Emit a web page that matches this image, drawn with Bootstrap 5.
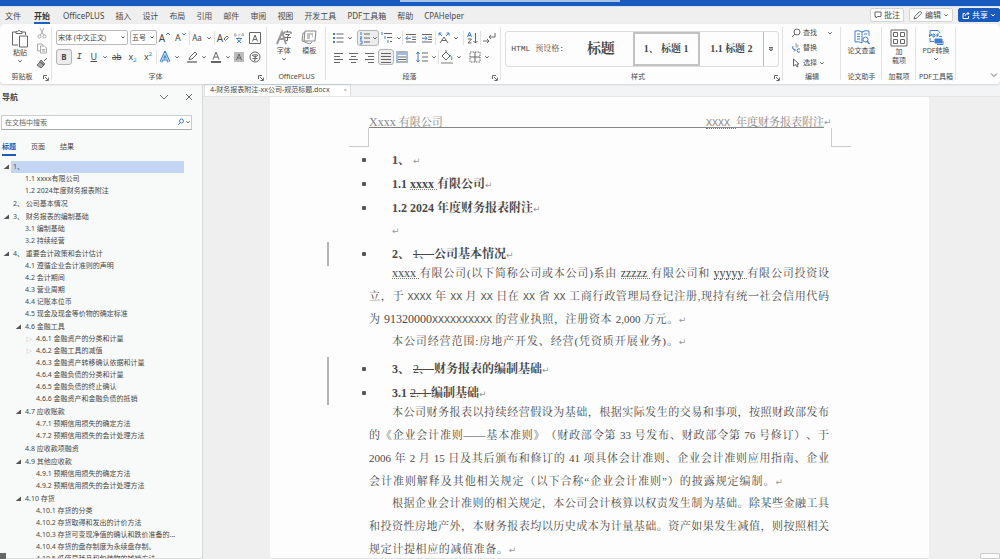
<!DOCTYPE html>
<html lang="zh-CN">
<head>
<meta charset="utf-8">
<meta name="viewport" content="width=device-width, initial-scale=1">
<title>4-财务报表附注-xx公司-规范标题.docx</title>
<link href="https://cdn.jsdelivr.net/npm/bootstrap@5.3.0/dist/css/bootstrap.min.css" rel="stylesheet">
<script src="https://cdn.jsdelivr.net/npm/bootstrap@5.3.0/dist/js/bootstrap.bundle.min.js" defer></script>
<style>
:root{--blue:#185abd;--ink:#484848}
body{font-family:"Noto Sans","Noto Sans CJK SC",sans-serif;font-size:7px;line-height:10px;color:var(--ink);background:#efefef}
button{font:inherit;color:inherit;background:none;border:0;padding:0}
a{color:inherit;text-decoration:none}
svg{display:block;fill:none;stroke:#666;stroke-width:1;flex:none}
.i16{width:16px;height:16px}.i12{width:12px;height:12px}.chev{width:6px;height:6px}
.b{stroke:#3f7fd0}
.titlebar{height:6px;background:var(--blue)}
.titlebar div{height:2px;width:22%;margin-left:40%;background:#a9c6ea}
.menubar{height:18px;font-size:8px;border-top:1px solid #d5e0f0}
.tabs8{gap:11px;padding-left:5px}
.tabs8 a{line-height:12px;border-bottom:2px solid transparent;margin-top:3px;white-space:nowrap}
.tabs8 a.on{font-weight:700;border-color:var(--blue);color:#333;margin-left:2px;margin-right:2px}
.actions{gap:5px;padding-top:1px}
.pill{background:#fff;border:1px solid #d4d4d4;border-radius:2px;height:14px;padding:0 3px;gap:2px}
.pill.share{background:var(--blue);border-color:var(--blue);color:#fff}
.pill.share svg{stroke:#fff}
.ribbon{background:#fdfdfd;height:60px;border-radius:5px 5px 4px 4px;box-shadow:0 1px 2px #d5d5d5;z-index:2}
.grp{position:relative;display:flex;flex-direction:column;height:60px;flex:none}
.grp::after{content:"";position:absolute;right:0;top:3px;bottom:4px;width:1px;background:#e2e2e2}
.gbody{height:46px;padding:0 4px}
.glabel{height:14px;line-height:14px;text-align:center;white-space:nowrap}
.launch{position:absolute;right:3px;bottom:3px}
.launch svg{width:6px;height:6px}
.rows{display:flex;flex-direction:column;padding-top:6px;gap:3px}
.rows>div{display:flex;align-items:center;height:16px}
.rows button{display:flex;align-items:center;justify-content:center;height:16px;width:16px;font-size:10px}
.rows button.dd{width:8px}
.rows button.boxed{border:1px solid #b5b5b5;background:#ececec;border-radius:3px}
.rows button.two{width:24px}
.rows button.t9{font-size:9px}
.rows button.t8{font-size:8px}
.rows button.n15{width:15px}
.tiny2{font-size:6px;color:#3f7fd0}
.vr1{width:1px;height:14px;background:#e2e2e2}
.combo{appearance:none;height:15px;border:1px solid #bbb;border-radius:2px;font-size:7px;line-height:12px;padding:0 8px 0 1px;color:var(--ink);background:#fff url("data:image/svg+xml,%3Csvg xmlns='http://www.w3.org/2000/svg' width='4' height='3'%3E%3Cpath d='M.5.5 2 2 3.5.5' fill='none' stroke='%23555'/%3E%3C/svg%3E") no-repeat right 2px center}
.combo.face{width:72px;margin-right:2px}.combo.size{width:27px}
.big{display:flex;flex-direction:column;align-items:center;padding-top:5px;line-height:9px}
.big svg.chev{margin-top:1px}
.w-clip{width:52px}.w-font{width:215px}.w-plus{width:59px}.w-para{width:175px}
.w-find{width:58px}.w-one{width:41px}.w-two{width:34px}.w-three{width:40px}
.w-paste{width:32px}.w-fold{width:44px;padding:0 2px 5px 0}
.stack3{padding-top:3px;gap:3px}
.tiny{padding-top:2px}
.tiny button{display:flex;height:15px;align-items:center;gap:2px}
.gallery{margin:7px 0 0;height:36px;border:1px solid #ddd;border-radius:3px}
.gallery button{flex:1 1 0;height:34px;font-family:"Liberation Serif","Noto Serif CJK SC","Noto Sans CJK SC",serif;font-weight:700;font-size:10px;white-space:nowrap;overflow:hidden}
.gallery .g-html{font-family:"Liberation Mono","Noto Serif CJK SC","Noto Sans CJK SC",monospace;font-weight:400;font-size:8px}
.gallery .g-title{font-size:14px}
.gallery .on{border:2px solid #c2c2c2}
.gallery .more{flex:0 0 15px;border-left:1px solid #bbb}
.navpane{width:203px;flex:none;background:#f8faf9;border-right:1px solid #d8d8d8;margin-top:1px;overflow:hidden;border-bottom:1px solid #ddd}
.ntitle{font-size:8px;height:24px;padding:0 9px 0 2px}
.search{margin:6px 10px 0 1px;height:15px;border:1px solid #ccc;border-bottom-color:#aaa;background:#fff}
.search input{border:0;outline:0;font-size:7px;padding:0 3px;min-width:0;background:none;color:#555;height:13px}
.search input::placeholder{color:#666;opacity:1}
.ntabs{gap:15px;padding:10px 0 0 2px;margin-bottom:5px}
.ntabs button{height:16px;border-bottom:2px solid transparent}
.ntabs .on{color:var(--blue);font-weight:700;border-color:var(--blue)}
.tree{list-style:none;margin:0;padding:0;line-height:12px}
.tree li{display:flex;align-items:center;height:12px;white-space:nowrap;padding-right:18px}
.tree li.p{margin-top:1px}
.tree a{flex:1;padding-left:2px;white-space:pre}
.tree li::before{content:"";width:11px;flex:none}
.tree .l2{padding-left:12px}.tree .l3{padding-left:23px}
.tree .open::before{width:6px;height:5px;margin:0 2px 0 3px;background:#555;clip-path:polygon(100% 0,100% 100%,0 100%)}
.tree .shut::before{content:"▷";color:#999;font-size:6px;padding-left:3px}
.tree .sel a{background:#c3d5f2}
.doctabs{height:13px;background:#f2f4f6;border-bottom:1px solid #e4e4e4;padding-left:1px}
.doctab{background:#fff;border:1px solid #ddd;border-top:1px solid #7fb0ea;border-bottom:0;width:147px;padding:0 3px 0 5px}
.doctab .x{color:#999;font-size:6px}
.canvas{padding:0 71px 0 67px;min-height:0}
.sheet{background:#fdfdfd;flex:1;padding:19px 100px 0 99px;font-family:"Liberation Serif","Noto Serif CJK SC","Noto Sans CJK SC",serif;border:0 solid #e2e2e2;border-bottom-width:1px;overflow:hidden;text-spacing-trim:space-all}
.m{font-family:"Liberation Mono",monospace;font-size:10px;font-weight:400}
.t{font-size:12px}
.w{border-bottom:1px dotted #777;line-height:9px;display:inline-block;white-space:pre}
.k{font-family:"DejaVu Sans",sans-serif;font-size:9px;color:#999;font-weight:400}
.runhead{position:relative;font-size:11px;line-height:12px;height:12px;color:#858585;display:flex;justify-content:space-between;border-bottom:1px solid #888;margin-right:5px}
.runhead .k{position:absolute;left:100%;top:0}
.corners{display:flex;justify-content:space-between;margin:0 -22px 0 -20px}
.corners i{width:20px;height:19px;border:0 solid #ccc;border-bottom-width:1px}
.corners i:first-child{border-right-width:1px}.corners i:last-child{border-left-width:1px}
.sheet h1,.sheet h2,.sheet .empty{position:relative;font-size:12px;line-height:16px;height:16px;margin:8px 0 0;padding-left:23px;font-weight:700;white-space:pre}
.sheet .empty{margin-top:6px}
.sheet .corners + h1{margin-top:5px}
.sheet h1::after,.sheet h2::after{content:"";position:absolute;left:-7px;top:6px;width:4px;height:4px;border-radius:1px;background:#555}
.rev::before{content:"";position:absolute;left:-42px;top:-4px;bottom:-4px;width:2px;background:#b5b5b5}
.sheet del{font-weight:400}
.sheet p{margin:0;font-size:11px;line-height:23px}
.sheet p+p{margin-top:-1px}
.sheet p span.ln{display:block;height:23px;text-align-last:justify;white-space:nowrap}
.sheet p span.ln:first-child{padding-left:23px}
.sheet .s-capital{width:69%}.sheet .s-scope{width:69%}.sheet .s-issue{width:90%}.sheet .s-loss{width:32%}
.corner-tip{position:absolute;right:0;bottom:0;width:20px;height:6px;border:1px solid #ccc;background:#fafafa;border-radius:2px 0 0 0}
.corner-mark{position:absolute;left:0;bottom:0;width:6px;height:6px;background:#666}
</style>
</head>
<body class="vh-100 d-flex flex-column overflow-hidden position-relative">
<svg width="0" height="0" class="position-absolute" aria-hidden="true">
<symbol id="cv" viewBox="0 0 6 6"><path d="M1.3 2.2 3 4l1.7-1.8"/></symbol>
<symbol id="la" viewBox="0 0 6 6"><path d="M.5 4V.5H4M2 2l3 3M5.4 2.5v3h-3"/></symbol>
<symbol id="ul" viewBox="0 0 16 16"><path class="b" stroke-width="2" d="M3 4h2M3 8h2M3 12h2"/><path d="M6.500 4h7M6.500 8h7M6.500 12h7"/></symbol>
<symbol id="outd" viewBox="0 0 16 16"><path d="M3 4.500h10M9 7h4M9 9.500h4M3 12h10"/><path class="b" d="M8 8.300H3m1.800-2L3 8.300l1.800 2"/></symbol>
<symbol id="ind" viewBox="0 0 16 16"><path d="M3 4.500h10M9 7h4M9 9.500h4M3 12h10"/><path class="b" d="M3 8.300h5m-1.800-2L8 8.300l-1.800 2"/></symbol>
</svg>

<div class="titlebar"><div></div></div>
<header class="menubar d-flex justify-content-between align-items-start">
<nav class="tabs8 d-flex" aria-label="功能区">
<a href="#">文件</a><a href="#" class="on">开始</a><a href="#">OfficePLUS</a><a href="#">插入</a><a href="#">设计</a><a href="#">布局</a><a href="#">引用</a><a href="#">邮件</a><a href="#">审阅</a><a href="#">视图</a><a href="#">开发工具</a><a href="#">PDF工具箱</a><a href="#">帮助</a><a href="#">CPAHelper</a>
</nav>
<div class="actions d-flex">
<button class="pill d-flex align-items-center"><svg width="8" height="8" viewBox="0 0 8 8"><path d="M1 1h6v4.500H3.500L2 7V5.500H1z"/></svg>批注</button>
<button class="pill d-flex align-items-center"><svg width="10" height="10" viewBox="0 0 10 10"><path d="M1 9l.8-2.600L7 1.200 8.800 3 3.600 8.200z"/></svg>编辑<svg class="chev"><use href="#cv"/></svg></button>
<button class="pill share d-flex align-items-center"><svg width="8" height="8" viewBox="0 0 8 8"><path d="M3 2.500H1v5h5.500V5M3 5c0-2 1.500-2.500 4-2.500M5.500 1 7 2.500 5.500 4"/></svg>共享<svg class="chev"><use href="#cv"/></svg></button>
</div>
</header>

<section class="ribbon d-flex position-relative">
<div class="grp w-clip"><div class="gbody d-flex">
<button class="big w-paste"><svg width="18" height="19" viewBox="0 0 18 19"><path d="M5 3H1.500v13H7M11 3h3.500v3M5 4.500v-2h1.500Q8 0 9.500 2.500H11v2z"/><path d="M8.500 7h8v11h-8z" fill="#fff"/></svg>粘贴<svg class="chev"><use href="#cv"/></svg></button>
<div class="stack3 d-flex flex-column">
<button aria-label="剪切"><svg class="i12" viewBox="0 0 12 12" style="stroke:#aaa"><path d="M4 1l3.500 7M8 1 4.500 8"/><circle cx="3.500" cy="9.500" r="1.500"/><circle cx="8.500" cy="9.500" r="1.500"/></svg></button>
<button aria-label="复制"><svg class="i12" viewBox="0 0 12 12" style="stroke:#aaa"><path d="M4 9H1.500V2H6l1 1.500M4.500 4h4l2 2v5h-6zM6 7.500h3M6 9h3"/></svg></button>
<button aria-label="格式刷"><svg class="i12" viewBox="0 0 12 12"><path d="M11 1 8 4M5 3l4 4-1.500 1-3.500-3.500zM4 5 1 8l4 3 3-3z" fill="#aaa"/></svg></button>
</div></div><div class="glabel pe-2">剪贴板</div><button class="launch" aria-label="剪贴板选项"><svg><use href="#la"/></svg></button></div>

<div class="grp w-font"><div class="gbody rows">
<div>
<select class="combo face" aria-label="字体"><option>宋体 (中文正文)</option></select>
<select class="combo size" aria-label="字号"><option>五号</option></select>
<button aria-label="增大字号">A<svg class="chev b mb-2"><path d="M1 4l2-2 2 2"/></svg></button>
<button class="t9" aria-label="减小字号">A<svg class="chev b mb-2"><use href="#cv"/></svg></button>
<span class="vr1"></span>
<button class="two t8">Aa<svg class="chev ms-1"><use href="#cv"/></svg></button>
<span class="vr1"></span>
<button aria-label="清除格式">A<svg width="6" height="7" viewBox="0 0 6 7"><path d="M1 5 4 2l1.500 1.500-3 3z"/></svg></button>
<button aria-label="拼音指南"><svg class="i12" viewBox="0 0 12 12"><path style="stroke:#aaa" d="M1 3h3M2 1v4M5 3h2M8 3h3M10 1v3"/><path class="b" d="M3 6.500h6M6 5.500v1M4.200 7.500 8 11M8 7.500 4 11"/></svg></button>
<button aria-label="字符边框"><svg class="i12" viewBox="0 0 12 12"><path d="M.5.500h11v11H.5zM3.500 9.500 6 3l2.500 6.500M4.300 7.500h3.400"/></svg></button>
</div>
<div>
<button class="boxed t8"><b>B</b></button>
<button class="n15 fst-italic font-monospace t9">I</button>
<button class="n15 t9 text-decoration-underline">U</button>
<button class="dd" aria-label="下划线选项"><svg class="chev"><use href="#cv"/></svg></button>
<button class="t8 text-decoration-line-through">ab</button>
<button class="t9" aria-label="下标">x<span class="tiny2 align-self-end">2</span></button>
<button class="t9" aria-label="上标">x<span class="tiny2 align-self-start">2</span></button>
<span class="vr1"></span>
<button aria-label="文本效果"><svg class="i12 b" viewBox="0 0 12 12"><path stroke-width="3" d="M2 11 6 2l4 9M4 8h4"/><path stroke="#fff" stroke-width=".8" d="M2 11 6 2l4 9M4 8h4"/></svg></button>
<button class="dd" aria-label="文本效果选项"><svg class="chev"><use href="#cv"/></svg></button>
<button class="ms-1" aria-label="突出显示"><svg class="i12" viewBox="0 0 12 12"><path d="M4 6 9 1l2 2-5 5-3 .5z"/><path stroke-width="2" style="stroke:#999" d="M1 11h10"/></svg></button>
<button class="dd" aria-label="突出显示选项"><svg class="chev"><use href="#cv"/></svg></button>
<button aria-label="字体颜色"><svg class="i12" viewBox="0 0 12 12"><path d="M3 8.500 6 1l3 7.500M4 6h4"/><path stroke-width="2" d="M1 11h10"/></svg></button>
<button class="dd" aria-label="字体颜色选项"><svg class="chev"><use href="#cv"/></svg></button>
<button aria-label="字符底纹"><svg class="i12" viewBox="0 0 12 12"><path d="M1 1h10v10H1z" fill="#bbb" stroke="none"/><path d="M3.500 9 6 3l2.500 6M4.300 7h3.400"/></svg></button>
<button aria-label="带圈字符"><svg class="i12" viewBox="0 0 12 12"><circle cx="6" cy="6" r="5"/><path d="M3.500 5V4h5v1M6 3v1M4.500 5.500h3L6 6.500V9.500H5M3.500 7.500h5"/></svg></button>
</div>
</div><div class="glabel pe-2">字体</div><button class="launch" aria-label="字体选项"><svg><use href="#la"/></svg></button></div>

<div class="grp w-plus"><div class="gbody d-flex justify-content-around">
<button class="big"><svg width="16" height="17" viewBox="0 0 16 17"><path stroke-width="2" d="M1 15 6 3l4 12M3 10h6" style="stroke:#999"/><path d="M8 5V3h7v2M11.500 1.500V3M9.500 5.500h4l-2 2v4h-1.500M8.500 8.500H15"/></svg>字体<svg class="chev"><use href="#cv"/></svg></button>
<button class="big"><svg width="16" height="17" viewBox="0 0 16 17"><path style="stroke:#888" d="M4 4H2L1 12l8 3 2-2M4 2h11l-1 10H3zM6 5h6M6 7h3M11 7h1M6 9h3"/></svg>模板</button>
</div><div class="glabel">OfficePLUS</div></div>

<div class="grp w-para"><div class="gbody rows">
<div>
<button aria-label="项目符号"><svg class="i16"><use href="#ul"/></svg></button><button class="dd me-1" aria-label="项目符号选项"><svg class="chev"><use href="#cv"/></svg></button>
<button class="two boxed" aria-label="编号"><svg width="14" height="14" viewBox="1 1 14 14"><path class="b" d="M4 2v3M3 7h2l-2 2h2M3 11h2v3H3"/><path d="M7 4h6M7 8h6M7 12h6"/></svg><svg class="chev"><use href="#cv"/></svg></button>
<button aria-label="多级列表"><svg class="i16" viewBox="0 0 16 16"><path class="b" d="M3 2v3M6 6v3M9 10v3"/><path d="M5 3.500h8M8 7.500h5M11 11.500h2"/></svg></button><button class="dd" aria-label="多级列表选项"><svg class="chev"><use href="#cv"/></svg></button>
<span class="vr1"></span>
<button aria-label="减少缩进"><svg class="i16"><use href="#outd"/></svg></button><button aria-label="增加缩进"><svg class="i16"><use href="#ind"/></svg></button>
<span class="vr1"></span>
<button aria-label="中文版式"><svg class="i16" viewBox="0 0 16 16"><path d="M4 13 8 7l4 6M6 10.500h4"/><path class="b" d="M3 3l3 3M13 3l-3 3M3 5.500V3h2.500M13 5.500V3h-2.500"/></svg></button><button class="dd" aria-label="中文版式选项"><svg class="chev"><use href="#cv"/></svg></button>
<span class="vr1 ms-1"></span>
<button aria-label="排序"><svg class="i16" viewBox="0 0 16 16"><path class="b" d="M3.500 7 5.500 2l2 5M4 5.500h3"/><path d="M4 9h3.500L4 13h3.500M11.500 3v10m-2-2 2 2 2-2"/></svg></button>
<span class="vr1"></span>
<button aria-label="编辑标记"><svg class="i16" viewBox="0 0 16 16"><path d="M14 3v4H8m2-2L8 7l2 2M2 11h6M6 9l2 2-2 2"/></svg></button>
</div>
<div>
<button aria-label="左对齐"><svg class="i16" viewBox="0 0 16 16"><path d="M4 4.500h9M4 7.500h6M4 10.500h9M4 13.500h6"/></svg></button>
<button aria-label="居中"><svg class="i16" viewBox="0 0 16 16"><path d="M3 4.500h9M5 7.500h5M3 10.500h9M5 13.500h5"/></svg></button>
<button aria-label="右对齐"><svg class="i16" viewBox="0 0 16 16"><path d="M3 4.500h9M6 7.500h6M3 10.500h9M6 13.500h6"/></svg></button>
<button class="boxed" aria-label="两端对齐"><svg width="14" height="14" viewBox="0 0 14 14"><path d="M2 3.500h10M2 6.500h10M2 9.500h10M2 12.500h10"/></svg></button>
<button aria-label="分散对齐"><svg class="i16" viewBox="0 0 16 16"><path class="b" d="M3 2v12M13 2v12M4 5h8"/><path d="M4 3h8M4 8h8M4 10.500h8M4 13h8"/></svg></button>
<button aria-label="行距" class="ms-1"><svg class="i16" viewBox="0 0 16 16"><path class="b" d="M4 3v10M2.500 5 4 3l1.500 2M2.500 11 4 13l1.500-2"/><path d="M8 4h6M8 8h6M8 12h6"/></svg></button><button class="dd" aria-label="行距选项"><svg class="chev"><use href="#cv"/></svg></button>
<span class="vr1"></span>
<button aria-label="底纹"><svg class="i16" viewBox="0 0 16 16"><path d="M7 3l4 4-4 4-4-4zM7 3V1"/><path class="b" d="M11 6q3 3 1.500 5"/><path d="M2 14h12" style="stroke:#bbb" stroke-width="2"/></svg></button><button class="dd me-1" aria-label="底纹选项"><svg class="chev"><use href="#cv"/></svg></button>
<button aria-label="边框"><svg class="i16" viewBox="0 0 16 16"><path d="M3 3h10v10H3z" stroke-dasharray="1.500 1"/><path d="M3 8h10M8 3v10"/></svg></button><button class="dd" aria-label="边框选项"><svg class="chev"><use href="#cv"/></svg></button>
</div>
</div><div class="glabel pe-2">段落</div><button class="launch" aria-label="段落选项"><svg><use href="#la"/></svg></button></div>

<div class="grp flex-fill"><div class="gbody">
<div class="gallery d-flex"><button class="g-html">HTML 预设格:</button><button class="g-title">标题</button><button class="on">1、 标题 1</button><button>1.1 标题 2</button><button class="more d-flex align-items-center justify-content-center" aria-label="其他样式"><svg class="chev"><path d="M1 1.500h4M1 3l2 2 2-2z"/></svg></button></div>
</div><div class="glabel pe-2">样式</div><button class="launch" aria-label="样式选项"><svg><use href="#la"/></svg></button></div>

<div class="grp w-find"><div class="gbody tiny ps-2">
<button><svg width="10" height="10" viewBox="0 0 10 10"><circle cx="6" cy="4" r="3"/><path d="M4 6 1 9"/></svg>查找<svg class="chev ms-2"><use href="#cv"/></svg></button>
<button><svg width="10" height="10" viewBox="0 0 10 10"><path class="b" d="M2 3Q0 6 4 7M3 5.500 4.500 7 3 8.500M9 6Q6 5 6 7.500T9 9"/><path d="M5 0v4h2V2H5" style="stroke:#aaa"/></svg>替换</button>
<button><svg width="10" height="10" viewBox="0 0 10 10"><path d="M2.500 1v7l2-1.500L6 9l1-.5-1-2.500h2z"/></svg>选择<svg class="chev"><use href="#cv"/></svg></button>
</div><div class="glabel">编辑</div></div>

<div class="grp w-one"><button class="big"><svg class="b" width="16" height="17" viewBox="0 0 16 17"><path d="M8 3v11M8 3Q5 1 1 2v11q4-1 7 1M8 3q3-2 7-1v5M3 5h3M3 7.500h3M3 10h3M10 5h3"/><circle cx="11.500" cy="10.500" r="2.500"/><path stroke-width="1.500" d="m13 12 2.500 3"/></svg>论文查重</button><div class="glabel mt-auto">论文助手</div></div>
<div class="grp w-two"><button class="big"><svg width="18" height="18" viewBox="0 0 18 18"><path d="M1 1h16v16H1zM3.500 3.500h4v4h-4zM10.500 3.500h4v4h-4zM3.500 10.500h4v4h-4zM10.500 10.500h4v4h-4z"/></svg>加<br>载项</button><div class="glabel mt-auto">加载项</div></div>
<div class="grp w-three"><button class="big"><svg class="b" width="16" height="17" viewBox="0 0 16 17"><path d="M2 4V1.500h8L12 4M2 9v3.500h4"/><path d="M1.500 8V5h2v1.500h-2M5 8V5h1l1 1v1L6 8zM9 8V5h2M9 6.500h1.500"/><path d="M7 10h7v4H7z" fill="#3f7fd0"/><path d="M14 7.500h-3M15 12v3.500H9"/></svg>PDF转换<svg class="chev"><use href="#cv"/></svg></button><div class="glabel mt-auto">PDF工具箱</div></div>
<div class="w-fold d-flex align-items-end justify-content-end"><button aria-label="折叠功能区"><svg width="8" height="8" viewBox="0 0 8 8"><path d="M1 2.500l3 3 3-3"/></svg></button></div>
</section>

<main class="d-flex flex-fill" style="min-height:0">
<aside class="navpane">
<div class="ntitle d-flex align-items-center"><b class="me-auto">导航</b><button class="me-3" aria-label="导航选项"><svg width="10" height="8" viewBox="0 0 10 8"><path d="M1 2l4 4 4-4"/></svg></button><button aria-label="关闭导航"><svg width="8" height="8" viewBox="0 0 8 8"><path d="M1 1l6 6M7 1 1 7"/></svg></button></div>
<div class="search d-flex align-items-center"><input class="flex-fill" aria-label="在文档中搜索" placeholder="在文档中搜索"><svg class="b" width="8" height="8" viewBox="0 0 8 8"><circle cx="4.500" cy="3" r="2"/><path d="M3 5 1 7"/></svg><svg class="chev"><use href="#cv"/></svg></div>
<div class="ntabs d-flex"><button class="on">标题</button><button>页面</button><button>结果</button></div>
<ul class="tree">
<li class="open sel"><a href="#">1、</a></li>
<li class="l2"><a href="#">1.1 xxxx有限公司</a></li>
<li class="l2"><a href="#">1.2 2024年度财务报表附注</a></li>
<li class="p"><a href="#">2、 公司基本情况</a></li>
<li class="open p"><a href="#">3、 财务报表的编制基础</a></li>
<li class="l2"><a href="#">3.1 编制基础</a></li>
<li class="l2"><a href="#">3.2 持续经营</a></li>
<li class="open p"><a href="#">4、 重要会计政策和会计估计</a></li>
<li class="l2"><a href="#">4.1 遵循企业会计准则的声明</a></li>
<li class="l2"><a href="#">4.2 会计期间</a></li>
<li class="l2"><a href="#">4.3 营业周期</a></li>
<li class="l2"><a href="#">4.4 记账本位币</a></li>
<li class="l2"><a href="#">4.5 现金及现金等价物的确定标准</a></li>
<li class="l2 open p"><a href="#">4.6 金融工具</a></li>
<li class="l3 shut"><a href="#">4.6.1 金融资产的分类和计量</a></li>
<li class="l3 shut"><a href="#">4.6.2 金融工具的减值</a></li>
<li class="l3"><a href="#">4.6.3 金融资产转移确认依据和计量</a></li>
<li class="l3"><a href="#">4.6.4 金融负债的分类和计量</a></li>
<li class="l3"><a href="#">4.6.5 金融负债的终止确认</a></li>
<li class="l3"><a href="#">4.6.6 金融资产和金融负债的抵销</a></li>
<li class="l2 open p"><a href="#">4.7 应收账款</a></li>
<li class="l3"><a href="#">4.7.1 预期信用损失的确定方法</a></li>
<li class="l3"><a href="#">4.7.2 预期信用损失的会计处理方法</a></li>
<li class="l2 p"><a href="#">4.8 应收款项融资</a></li>
<li class="l2 open p"><a href="#">4.9 其他应收款</a></li>
<li class="l3"><a href="#">4.9.1 预期信用损失的确定方法</a></li>
<li class="l3"><a href="#">4.9.2 预期信用损失的会计处理方法</a></li>
<li class="l2 open p"><a href="#">4.10 存货</a></li>
<li class="l3"><a href="#">4.10.1 存货的分类</a></li>
<li class="l3"><a href="#">4.10.2 存货取得和发出的计价方法</a></li>
<li class="l3"><a href="#">4.10.3 存货可变现净值的确认和跌价准备的...</a></li>
<li class="l3"><a href="#">4.10.4 存货的盘存制度为永续盘存制。</a></li>
<li class="l3"><a href="#">4.10.5 低值易耗品和包装物的摊销方法</a></li>
</ul>
</aside>
<div class="d-flex flex-column flex-fill" style="min-width:0">
<div class="doctabs d-flex"><a href="#" class="doctab d-flex justify-content-between align-items-center"><span>4-财务报表附注-xx公司-规范标题.docx</span><span class="x">×</span></a></div>
<div class="canvas d-flex flex-fill">
<article class="sheet">
<div class="runhead"><span><span class="t w">Xxxx </span>有限公司</span><span><span class="m w">XXXX </span>年度财务报表附注</span><span class="k">↵</span></div>
<div class="corners"><i></i><i></i></div>
<h1>1、 <span class="k">↵</span></h1>
<h2>1.1 <span class="t w">xxxx </span>有限公司<span class="k">↵</span></h2>
<h2>1.2 2024 年度财务报表附注<span class="k">↵</span></h2>
<div class="empty"><span class="k">↵</span></div>
<h1 class="rev">2、 <del>1、 </del>公司基本情况<span class="k">↵</span></h1>
<p><span class="ln"><span class="t w">xxxx </span>有限公司(以下简称公司或本公司)系由 <span class="t w">zzzzz </span>有限公司和 <span class="t w">yyyyy </span>有限公司投资设</span><span class="ln">立，于 <span class="m">XXXX</span> 年 <span class="m">XX</span> 月 <span class="m">XX</span> 日在 <span class="m">XX</span> 省 <span class="m">XX</span> 工商行政管理局登记注册,现持有统一社会信用代码</span><span class="ln s-capital">为 <span class="t">91320000</span><span class="m">XXXXXXXXXX</span> 的营业执照，注册资本 2,000 万元。<span class="k">↵</span></span></p>
<p><span class="ln s-scope">本公司经营范围:房地产开发、经营(凭资质开展业务)。<span class="k">↵</span></span></p>
<h1 class="rev">3、 <del>2、 </del>财务报表的编制基础<span class="k">↵</span></h1>
<h2 class="rev">3.1 <del>2. 1 </del>编制基础<span class="k">↵</span></h2>
<p><span class="ln">本公司财务报表以持续经营假设为基础，根据实际发生的交易和事项，按照财政部发布</span><span class="ln">的《企业会计准则——基本准则》（财政部令第 33 号发布、财政部令第 76 号修订）、于</span><span class="ln">2006 年 2 月 15 日及其后颁布和修订的 41 项具体会计准则、企业会计准则应用指南、企业</span><span class="ln s-issue">会计准则解释及其他相关规定（以下合称“企业会计准则”）的披露规定编制。<span class="k">↵</span></span></p>
<p><span class="ln">根据企业会计准则的相关规定，本公司会计核算以权责发生制为基础。除某些金融工具</span><span class="ln">和投资性房地产外，本财务报表均以历史成本为计量基础。资产如果发生减值，则按照相关</span><span class="ln s-loss">规定计提相应的减值准备。<span class="k">↵</span></span></p>
</article>
</div>
</div>
</main>
<div class="corner-mark"></div><div class="corner-tip"></div>
</body>
</html>
